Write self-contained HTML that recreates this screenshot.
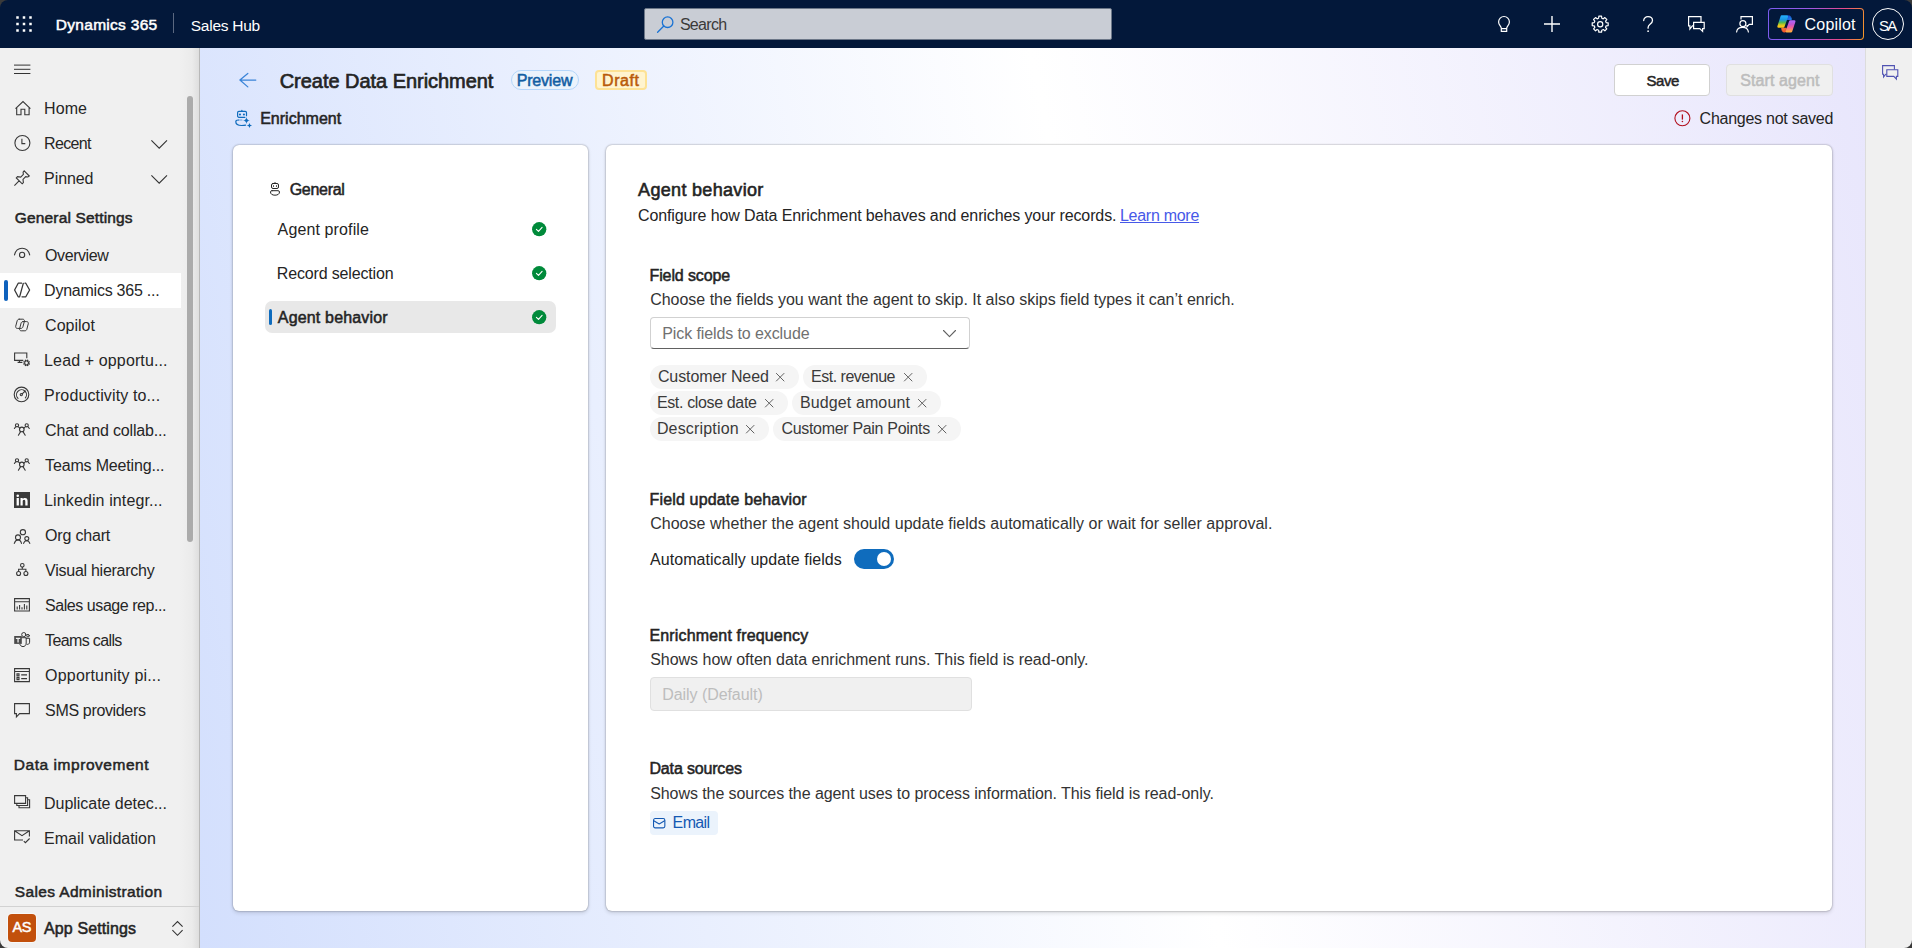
<!DOCTYPE html>
<html lang="en"><head><meta charset="utf-8"><title>Create Data Enrichment - Dynamics 365</title>
<style>
html,body{margin:0;padding:0;}
body{width:1912px;height:948px;overflow:hidden;position:relative;background:#f0f0f0;font-family:"Liberation Sans",sans-serif;}
.t{position:absolute;white-space:nowrap;line-height:normal;font-family:"Liberation Sans",sans-serif;}
</style></head>
<body>
<div style="position:absolute;left:0px;top:0px;width:1912px;height:48px;background:#03183a;"></div>
<svg style="position:absolute;left:15.6px;top:15.6px;overflow:visible" width="16" height="16" viewBox="0 0 16 16" ><rect x="0.25" y="0.25" width="2.5" height="2.5" fill="#fff"/><rect x="0.25" y="6.75" width="2.5" height="2.5" fill="#fff"/><rect x="0.25" y="13.25" width="2.5" height="2.5" fill="#fff"/><rect x="6.75" y="0.25" width="2.5" height="2.5" fill="#fff"/><rect x="6.75" y="6.75" width="2.5" height="2.5" fill="#fff"/><rect x="6.75" y="13.25" width="2.5" height="2.5" fill="#fff"/><rect x="13.25" y="0.25" width="2.5" height="2.5" fill="#fff"/><rect x="13.25" y="6.75" width="2.5" height="2.5" fill="#fff"/><rect x="13.25" y="13.25" width="2.5" height="2.5" fill="#fff"/></svg>
<span id="t_d365" class="t" style="left:55.86px;top:16.00px;font-size:15.5px;font-weight:400;-webkit-text-stroke:0.51px #fff;color:#fff;letter-spacing:0.282px;">Dynamics 365</span>
<div style="position:absolute;left:173px;top:13px;width:1px;height:20px;background:#5b6880;"></div>
<span id="t_saleshub" class="t" style="left:190.80px;top:16.70px;font-size:15.5px;font-weight:400;color:#fff;letter-spacing:-0.262px;">Sales Hub</span>
<div style="position:absolute;left:644px;top:8px;width:468px;height:32px;background:#c9cdd5;border:1px solid #6c7788;box-sizing:border-box;border-radius:2px;"></div>
<svg style="position:absolute;left:656.5px;top:15.8px;overflow:visible" width="17" height="17" viewBox="0 0 17 17" ><circle cx="10.6" cy="6.2" r="5.3" fill="none" stroke="#1a73d4" stroke-width="1.3" stroke-linecap="round" stroke-linejoin="round"/><path fill="none" stroke="#1a73d4" stroke-width="1.3" stroke-linecap="round" stroke-linejoin="round" d="M6.8 10 L0.6 16.2"/></svg>
<span id="t_search" class="t" style="left:679.90px;top:15.70px;font-size:16px;font-weight:400;color:#3b3a39;letter-spacing:-0.699px;">Search</span>
<svg style="position:absolute;left:1497.7px;top:15.8px;overflow:visible" width="12" height="16" viewBox="0 0 12 16" ><path fill="none" stroke="#ffffff" stroke-width="1.2" stroke-linecap="round" stroke-linejoin="round" d="M3.3 12.2 C3.3 10.2 0.6 9.2 0.6 5.9 A5.4 5.4 0 0 1 11.4 5.9 C11.4 9.2 8.7 10.2 8.7 12.2 V15.4 H3.3 Z M3.3 12.6 H8.7"/></svg>
<svg style="position:absolute;left:1544.1px;top:16px;overflow:visible" width="16" height="16" viewBox="0 0 16 16" ><path fill="none" stroke="#ffffff" stroke-width="1.4" stroke-linecap="butt" stroke-linejoin="miter" d="M8 0 V16 M0 8 H16"/></svg>
<svg style="position:absolute;left:1591.9px;top:15.8px;overflow:visible" width="16.4" height="16.4" viewBox="0 0 16.4 16.4" ><path fill="none" stroke="#ffffff" stroke-width="1.2" stroke-linecap="round" stroke-linejoin="round" d="M6.61 2.21 L6.83 0.22 L9.57 0.22 L9.79 2.21 L11.31 2.84 L12.88 1.59 L14.81 3.52 L13.56 5.09 L14.19 6.61 L16.18 6.83 L16.18 9.57 L14.19 9.79 L13.56 11.31 L14.81 12.88 L12.88 14.81 L11.31 13.56 L9.79 14.19 L9.57 16.18 L6.83 16.18 L6.61 14.19 L5.09 13.56 L3.52 14.81 L1.59 12.88 L2.84 11.31 L2.21 9.79 L0.22 9.57 L0.22 6.83 L2.21 6.61 L2.84 5.09 L1.59 3.52 L3.52 1.59 L5.09 2.84 Z"/><circle cx="8.2" cy="8.2" r="2.6" fill="none" stroke="#ffffff" stroke-width="1.2" stroke-linecap="round" stroke-linejoin="round"/></svg>
<svg style="position:absolute;left:1642.8px;top:15.9px;overflow:visible" width="10.2" height="16.2" viewBox="0 0 10.2 16.2" ><path fill="none" stroke="#ffffff" stroke-width="1.3" stroke-linecap="round" stroke-linejoin="round" d="M0.7 4.6 C0.7 1.9 2.8 0.7 5 0.7 C7.6 0.7 9.5 2.3 9.5 4.6 C9.5 8 5.1 8.2 5.1 11.6 V12.2"/><circle cx="5.1" cy="15.2" r="0.85" fill="#ffffff"/></svg>
<svg style="position:absolute;left:1687.8px;top:16.2px;overflow:visible" width="17" height="16" viewBox="0 0 17 16" ><path fill="none" stroke="#ffffff" stroke-width="1.2" stroke-linecap="butt" stroke-linejoin="miter" d="M5.4 9.8 H4.4 L1.9 13 V9.8 H0.6 V0.6 H13 V6"/><path fill="none" stroke="#ffffff" stroke-width="1.2" stroke-linecap="butt" stroke-linejoin="miter" d="M5.6 6.3 H16.2 V12.6 H14.6 V15.4 L11.8 12.6 H5.6 Z"/></svg>
<svg style="position:absolute;left:1735.7px;top:16px;overflow:visible" width="17" height="16.4" viewBox="0 0 17 16.4" ><circle cx="6.9" cy="7.7" r="3" fill="none" stroke="#ffffff" stroke-width="1.2" stroke-linecap="round" stroke-linejoin="round"/><path fill="none" stroke="#ffffff" stroke-width="1.2" stroke-linecap="round" stroke-linejoin="round" d="M0.6 16 C0.9 12.8 3.6 11.4 6.6 11.4 C9.6 11.4 12 12.8 12.4 16"/><path fill="none" stroke="#ffffff" stroke-width="1.2" stroke-linecap="butt" stroke-linejoin="miter" d="M5 3.4 V0.6 H16.4 V8.4 H13.2 L11 10.8 V9"/></svg>
<div style="position:absolute;left:1768px;top:8px;width:96px;height:32px;border-radius:4px;background:linear-gradient(100deg,#7a5cf0 0%,#9b59e8 40%,#e8488c 75%,#f59a23 100%);"></div>
<div style="position:absolute;left:1769.2px;top:9.2px;width:93.6px;height:29.6px;border-radius:3px;background:#03183a;"></div>
<svg style="position:absolute;left:1776.6px;top:14.8px;overflow:visible" width="19" height="18.2" viewBox="0 0 19 18.2" ><defs><linearGradient id="cg1" x1="0" y1="0" x2="0" y2="1"><stop offset="0" stop-color="#22aaf8"/><stop offset="0.32" stop-color="#1a98e0"/><stop offset="0.6" stop-color="#52b84e"/><stop offset="0.85" stop-color="#d9c81e"/><stop offset="1" stop-color="#fcc419"/></linearGradient><linearGradient id="cg2" x1="0" y1="0" x2="0" y2="1"><stop offset="0" stop-color="#b163f2"/><stop offset="0.3" stop-color="#c455cf"/><stop offset="0.6" stop-color="#f0609a"/><stop offset="0.85" stop-color="#fb8a66"/><stop offset="1" stop-color="#ffa740"/></linearGradient><linearGradient id="cg3" x1="0" y1="0" x2="1" y2="1"><stop offset="0" stop-color="#1d43d4"/><stop offset="1" stop-color="#1f86ee"/></linearGradient><linearGradient id="cg4" x1="0" y1="0" x2="0.6" y2="1"><stop offset="0" stop-color="#fb7a35"/><stop offset="1" stop-color="#f4502a"/></linearGradient></defs><path fill="url(#cg3)" stroke="url(#cg3)" stroke-width="1" stroke-linejoin="round" d="M10.4 0.9 H12 C13 0.9 13.5 1.5 13.8 2.4 L14.4 4.4 H10 Z"/><path fill="url(#cg4)" stroke="url(#cg4)" stroke-width="1" stroke-linejoin="round" d="M4.7 13.3 H9.2 L8.4 17 H7 C6 17 5.5 16.4 5.2 15.5 Z"/><path fill="url(#cg1)" stroke="url(#cg1)" stroke-width="2.4" stroke-linejoin="round" d="M4.7 1.5 H9.9 L6.3 11.6 H1.5 Z"/><path fill="url(#cg2)" stroke="url(#cg2)" stroke-width="2.4" stroke-linejoin="round" d="M13.3 6.4 H17.3 L14 16.3 H9.7 Z"/></svg>
<span id="t_copilotbtn" class="t" style="left:1804.60px;top:16.00px;font-size:16px;font-weight:400;color:#fff;letter-spacing:0.190px;">Copilot</span>
<div style="position:absolute;left:1872px;top:8px;width:32px;height:32px;border-radius:50%;border:1.3px solid #fff;box-sizing:border-box;"></div>
<span id="t_sa" class="t" style="left:1878.90px;top:16.60px;font-size:15px;font-weight:400;color:#fff;letter-spacing:-1.705px;">SA</span>
<div style="position:absolute;left:0px;top:48px;width:200px;height:900px;background:linear-gradient(90deg,#f0f0f0 0,#f0f0f0 180px,#ebebeb 192px,#dedede 199px,#b8b8b8 199px,#b8b8b8 200px);"></div>
<svg style="position:absolute;left:14px;top:64px;overflow:visible" width="17" height="10" viewBox="0 0 17 10" ><path fill="none" stroke="#333" stroke-width="1" stroke-linecap="butt" stroke-linejoin="miter" d="M0 1.1 H16.4 M0 5.3 H16.4 M0 9.5 H16.4"/></svg>
<div style="position:absolute;left:187.2px;top:95.8px;width:5.8px;height:446px;background:#ababab;border-radius:3px;"></div>
<div style="position:absolute;left:0px;top:273px;width:181px;height:35px;background:#fff;"></div>
<div style="position:absolute;left:4px;top:280px;width:4px;height:21px;background:#0f62bd;border-radius:2px;"></div>
<span id="t_n_home" class="t" style="left:44.10px;top:100.00px;font-size:16px;font-weight:400;color:#262626;letter-spacing:0.040px;">Home</span>
<svg style="position:absolute;left:14.6px;top:100.9px;overflow:visible" width="16" height="16" viewBox="0 0 16 16" ><path fill="none" stroke="#383838" stroke-width="1.1" stroke-linecap="butt" stroke-linejoin="miter" d="M0.5 7.7 L8 0.6 L15.4 7.7 M1.7 6.7 V13.8 H6 V8.3 H9.8 V13.8 H14.1 V6.7"/></svg>
<span id="t_n_recent" class="t" style="left:44.10px;top:135.00px;font-size:16px;font-weight:400;color:#262626;letter-spacing:-0.670px;">Recent</span>
<svg style="position:absolute;left:14px;top:135px;overflow:visible" width="16" height="16" viewBox="0 0 16 16" ><circle cx="8.4" cy="8" r="7.5" fill="none" stroke="#383838" stroke-width="1.1" stroke-linecap="round" stroke-linejoin="round"/><path fill="none" stroke="#383838" stroke-width="1.1" stroke-linecap="butt" stroke-linejoin="miter" d="M7.9 3.8 V8.6 H11.3"/></svg>
<span id="t_n_pinned" class="t" style="left:44.10px;top:170.00px;font-size:16px;font-weight:400;color:#262626;letter-spacing:-0.084px;">Pinned</span>
<svg style="position:absolute;left:14.2px;top:170.4px;overflow:visible" width="16" height="16" viewBox="0 0 16 16" ><path fill="none" stroke="#383838" stroke-width="1.1" stroke-linecap="butt" stroke-linejoin="miter" d="M0.4 15.6 L5.3 10.7 M10.2 0.9 L15.3 6 L13.9 7 L11.7 6.7 L9 9.4 L9.4 12.6 L8.2 13.8 L2.3 7.9 L3.5 6.7 L6.7 7.1 L9.4 4.4 L9.1 2.2 Z"/></svg>
<span id="t_n_overview" class="t" style="left:45.10px;top:247.00px;font-size:16px;font-weight:400;color:#262626;letter-spacing:-0.432px;">Overview</span>
<svg style="position:absolute;left:14px;top:246px;overflow:visible" width="16" height="16" viewBox="0 0 16 16" ><path fill="none" stroke="#383838" stroke-width="1.1" stroke-linecap="round" stroke-linejoin="round" d="M0.5 8.9 C2.6 0 13.6 0 15.7 8.9"/><circle cx="8.1" cy="8.9" r="2.6" fill="none" stroke="#383838" stroke-width="1.1" stroke-linecap="round" stroke-linejoin="round"/></svg>
<span id="t_n_dyn" class="t" style="left:44.10px;top:282.00px;font-size:16px;font-weight:400;color:#262626;letter-spacing:-0.241px;">Dynamics 365 ...</span>
<svg style="position:absolute;left:14.2px;top:282px;overflow:visible" width="16" height="16" viewBox="0 0 16 16" ><path fill="none" stroke="#383838" stroke-width="1.3" stroke-linecap="round" stroke-linejoin="round" d="M7.6 1.2 H4.2 L0.6 8 L4.2 14.8 H5.2 M9.3 1.4 L5.6 14.8 M8 14.8 H11.8 L15.6 8 L11.8 1.2 H11"/></svg>
<span id="t_n_cop" class="t" style="left:45.10px;top:317.00px;font-size:16px;font-weight:400;color:#262626;letter-spacing:-0.010px;">Copilot</span>
<svg style="position:absolute;left:14.2px;top:318.2px;overflow:visible" width="16" height="16" viewBox="0 0 16 16" ><path fill="none" stroke="#383838" stroke-width="1" stroke-linecap="round" stroke-linejoin="round" d="M5.2 1.2h3.6c1.1 0 1.9 1 1.6 2.1l-1.5 5.6c-.25.9-1 1.5-1.9 1.5H3.3c-1.1 0-1.9-1-1.6-2.1l1.5-5.6c.25-.9 1-1.5 1.9-1.5z"/><path fill="none" stroke="#383838" stroke-width="1" stroke-linecap="round" stroke-linejoin="round" d="M9 3.6h3.7c1.1 0 1.9 1 1.6 2.1l-1.5 5.6c-.25.9-1 1.5-1.9 1.5H7.2c-1.1 0-1.9-1-1.6-2.1l1.5-5.6C7.35 4.2 8.1 3.6 9 3.6z"/></svg>
<span id="t_n_lead" class="t" style="left:44.10px;top:352.00px;font-size:16px;font-weight:400;color:#262626;letter-spacing:0.126px;">Lead + opportu...</span>
<svg style="position:absolute;left:13.6px;top:352.3px;overflow:visible" width="16" height="16" viewBox="0 0 16 16" ><path fill="none" stroke="#383838" stroke-width="1.1" stroke-linecap="butt" stroke-linejoin="miter" d="M9.3 8.4 H0.6 V1 H12.8 V6.2 M5.5 8.4 V10.4 M3.6 10.4 H8.4"/><circle cx="12.6" cy="10.9" r="1.9" fill="none" stroke="#383838" stroke-width="1.0" stroke-linecap="round" stroke-linejoin="round"/><path fill="none" stroke="#383838" stroke-width="1.5" stroke-linecap="butt" stroke-linejoin="miter" d="M14.36 11.63 L15.74 12.20 M13.33 12.66 L13.90 14.04 M11.87 12.66 L11.30 14.04 M10.84 11.63 L9.46 12.20 M10.84 10.17 L9.46 9.60 M11.87 9.14 L11.30 7.76 M13.33 9.14 L13.90 7.76 M14.36 10.17 L15.74 9.60 "/></svg>
<span id="t_n_prod" class="t" style="left:44.10px;top:387.00px;font-size:16px;font-weight:400;color:#262626;letter-spacing:0.131px;">Productivity to...</span>
<svg style="position:absolute;left:14px;top:386px;overflow:visible" width="16" height="16" viewBox="0 0 16 16" ><circle cx="7.5" cy="8.4" r="7.3" fill="none" stroke="#383838" stroke-width="1.1" stroke-linecap="round" stroke-linejoin="round"/><path fill="none" stroke="#383838" stroke-width="1.1" stroke-linecap="round" stroke-linejoin="round" d="M4.0 12.3 A5 5 0 1 1 11.4 11.9"/><circle cx="7.3" cy="8.6" r="1.1" fill="none" stroke="#383838" stroke-width="1.1" stroke-linecap="round" stroke-linejoin="round"/><path fill="none" stroke="#383838" stroke-width="1.1" stroke-linecap="round" stroke-linejoin="round" d="M8.2 7.8 L11.2 5"/></svg>
<span id="t_n_chatc" class="t" style="left:45.10px;top:422.00px;font-size:16px;font-weight:400;color:#262626;letter-spacing:-0.169px;">Chat and collab...</span>
<svg style="position:absolute;left:14px;top:421.5px;overflow:visible" width="16" height="16" viewBox="0 0 16 16" ><circle cx="7.8" cy="7.4" r="2.3" fill="none" stroke="#383838" stroke-width="1.1" stroke-linecap="round" stroke-linejoin="round"/><path fill="none" stroke="#383838" stroke-width="1.1" stroke-linecap="round" stroke-linejoin="round" d="M4.4 13.2 L6.6 9.6 M11.2 13.2 L9 9.6"/><circle cx="3" cy="3.3" r="1.6" fill="none" stroke="#383838" stroke-width="1.1" stroke-linecap="round" stroke-linejoin="round"/><circle cx="12.7" cy="3.3" r="1.6" fill="none" stroke="#383838" stroke-width="1.1" stroke-linecap="round" stroke-linejoin="round"/><path fill="none" stroke="#383838" stroke-width="1.1" stroke-linecap="round" stroke-linejoin="round" d="M0.4 6.5 L1.6 4.9 M4.4 4.9 L5.8 6.2 M15.3 6.5 L14.1 4.9 M11.3 4.9 L9.9 6.2"/></svg>
<span id="t_n_teamsm" class="t" style="left:45.10px;top:457.00px;font-size:16px;font-weight:400;color:#262626;letter-spacing:-0.166px;">Teams Meeting...</span>
<svg style="position:absolute;left:14px;top:456.5px;overflow:visible" width="16" height="16" viewBox="0 0 16 16" ><circle cx="7.8" cy="7.4" r="2.3" fill="none" stroke="#383838" stroke-width="1.1" stroke-linecap="round" stroke-linejoin="round"/><path fill="none" stroke="#383838" stroke-width="1.1" stroke-linecap="round" stroke-linejoin="round" d="M4.4 13.2 L6.6 9.6 M11.2 13.2 L9 9.6"/><circle cx="3" cy="3.3" r="1.6" fill="none" stroke="#383838" stroke-width="1.1" stroke-linecap="round" stroke-linejoin="round"/><circle cx="12.7" cy="3.3" r="1.6" fill="none" stroke="#383838" stroke-width="1.1" stroke-linecap="round" stroke-linejoin="round"/><path fill="none" stroke="#383838" stroke-width="1.1" stroke-linecap="round" stroke-linejoin="round" d="M0.4 6.5 L1.6 4.9 M4.4 4.9 L5.8 6.2 M15.3 6.5 L14.1 4.9 M11.3 4.9 L9.9 6.2"/></svg>
<span id="t_n_lnk" class="t" style="left:44.10px;top:492.00px;font-size:16px;font-weight:400;color:#262626;letter-spacing:0.113px;">Linkedin integr...</span>
<svg style="position:absolute;left:14px;top:492px;overflow:visible" width="16" height="16" viewBox="0 0 16 16" ><rect x="0" y="0" width="16" height="16" fill="#3a3a3a"/><path fill="#fff" d="M2.6 6.1h2.3v7.3H2.6z M3.75 2.4a1.3 1.3 0 1 1 0 2.6a1.3 1.3 0 0 1 0-2.6z M6.5 6.1h2.2v1c.4-.7 1.2-1.2 2.3-1.2c2.2 0 2.6 1.4 2.6 3.3v4.2h-2.3V9.7c0-.9 0-2-1.2-2s-1.4 1-1.4 1.9v3.8H6.5z"/></svg>
<span id="t_n_org" class="t" style="left:45.10px;top:527.00px;font-size:16px;font-weight:400;color:#262626;letter-spacing:-0.193px;">Org chart</span>
<svg style="position:absolute;left:14px;top:528.6px;overflow:visible" width="16" height="16" viewBox="0 0 16 16" ><circle cx="8.9" cy="3.2" r="2.6" fill="none" stroke="#383838" stroke-width="1.1" stroke-linecap="round" stroke-linejoin="round"/><circle cx="4" cy="8.4" r="2.5" fill="none" stroke="#383838" stroke-width="1.1" stroke-linecap="round" stroke-linejoin="round"/><circle cx="12.8" cy="9.6" r="2" fill="none" stroke="#383838" stroke-width="1.1" stroke-linecap="round" stroke-linejoin="round"/><path fill="none" stroke="#383838" stroke-width="1.1" stroke-linecap="round" stroke-linejoin="round" d="M0.3 14.4 C1.2 11.6 2.6 10.9 4 10.9 C5.4 10.9 6.8 11.6 7.5 14.4 M9.6 14.4 C10.2 12.3 11.5 11.7 12.8 11.7 C14.1 11.7 15.2 12.5 15.8 14.4"/></svg>
<span id="t_n_vis" class="t" style="left:45.10px;top:562.00px;font-size:16px;font-weight:400;color:#262626;letter-spacing:-0.263px;">Visual hierarchy</span>
<svg style="position:absolute;left:15.5px;top:563.4px;overflow:visible" width="16" height="16" viewBox="0 0 16 16" ><circle cx="6.3" cy="2.3" r="1.8" fill="none" stroke="#383838" stroke-width="1.1" stroke-linecap="round" stroke-linejoin="round"/><circle cx="2.6" cy="10.5" r="2" fill="none" stroke="#383838" stroke-width="1.1" stroke-linecap="round" stroke-linejoin="round"/><circle cx="9.9" cy="10.5" r="2" fill="none" stroke="#383838" stroke-width="1.1" stroke-linecap="round" stroke-linejoin="round"/><path fill="none" stroke="#383838" stroke-width="1.1" stroke-linecap="butt" stroke-linejoin="miter" d="M6.3 4.1 V6.3 M2.6 8.5 V6.3 H9.9 V8.5"/></svg>
<span id="t_n_salesu" class="t" style="left:45.10px;top:597.00px;font-size:16px;font-weight:400;color:#262626;letter-spacing:-0.448px;">Sales usage rep...</span>
<svg style="position:absolute;left:14px;top:597.6px;overflow:visible" width="16" height="16" viewBox="0 0 16 16" ><path fill="none" stroke="#383838" stroke-width="1.1" stroke-linecap="butt" stroke-linejoin="miter" d="M0.6 0.6 H15.4 V13 H0.6 Z M0.6 3.7 H15.4"/><path fill="none" stroke="#383838" stroke-width="1.1" stroke-linecap="butt" stroke-linejoin="miter" d="M3.2 11.4 V8.6 M5.6 11.4 V7 M8 11.4 V9.2 M10.4 11.4 V6 M12.8 11.4 V7.6"/></svg>
<span id="t_n_tcalls" class="t" style="left:45.10px;top:632.00px;font-size:16px;font-weight:400;color:#262626;letter-spacing:-0.638px;">Teams calls</span>
<svg style="position:absolute;left:14px;top:632px;overflow:visible" width="16" height="16" viewBox="0 0 16 16" ><circle cx="9.8" cy="2.6" r="2.1" fill="none" stroke="#383838" stroke-width="1" stroke-linecap="round" stroke-linejoin="round"/><circle cx="14" cy="3.7" r="1.3" fill="none" stroke="#383838" stroke-width="1" stroke-linecap="round" stroke-linejoin="round"/><path fill="none" stroke="#383838" stroke-width="1" stroke-linecap="round" stroke-linejoin="round" d="M7.5 5.7 H12.2 V11 C12.2 13.4 10.6 14.6 9 14.6 C7.6 14.6 6.3 13.7 5.9 12.4 M12.2 6.3 H15.6 V10.2 C15.6 12 14.2 12.6 13 12.4"/><rect x="0.2" y="4" width="7.6" height="7.9" fill="#4a4a4a"/><path fill="#f0f0f0" d="M1.9 5.8 H6.2 V7 H4.7 V10.6 H3.4 V7 H1.9 Z"/></svg>
<span id="t_n_opp" class="t" style="left:45.10px;top:667.00px;font-size:16px;font-weight:400;color:#262626;letter-spacing:0.181px;">Opportunity pi...</span>
<svg style="position:absolute;left:14px;top:667.7px;overflow:visible" width="16" height="16" viewBox="0 0 16 16" ><path fill="none" stroke="#383838" stroke-width="1.1" stroke-linecap="butt" stroke-linejoin="miter" d="M0.6 0.6 H15.4 V13.6 H0.6 Z M0.6 3.5 H15.4 M3 5.9 H5 V7.9 H3 Z M3 9.6 H5 V11.6 H3 Z M7.2 6.9 H13 M7.2 10.6 H13"/></svg>
<span id="t_n_sms" class="t" style="left:45.10px;top:702.00px;font-size:16px;font-weight:400;color:#262626;letter-spacing:-0.343px;">SMS providers</span>
<svg style="position:absolute;left:14px;top:702.8px;overflow:visible" width="16" height="16" viewBox="0 0 16 16" ><path fill="none" stroke="#383838" stroke-width="1.1" stroke-linecap="butt" stroke-linejoin="miter" d="M0.6 0.6 H15.4 V10.6 H5.6 L2.4 13.8 V10.6 H0.6 Z"/></svg>
<span id="t_n_dupd" class="t" style="left:44.10px;top:794.70px;font-size:16px;font-weight:400;color:#262626;letter-spacing:-0.046px;">Duplicate detec...</span>
<svg style="position:absolute;left:14px;top:795.2px;overflow:visible" width="16" height="16" viewBox="0 0 16 16" ><path fill="none" stroke="#383838" stroke-width="1.1" stroke-linecap="butt" stroke-linejoin="miter" d="M0.6 0.6 H11.6 V8.4 H0.6 Z M11.6 2.7 H13.6 V10.5 H2.8 V8.4 M13.6 4.8 H15.6 V12.7 H5 V10.5"/></svg>
<span id="t_n_emailv" class="t" style="left:44.10px;top:829.70px;font-size:16px;font-weight:400;color:#262626;letter-spacing:-0.017px;">Email validation</span>
<svg style="position:absolute;left:14px;top:830.4px;overflow:visible" width="16" height="16" viewBox="0 0 16 16" ><path fill="none" stroke="#383838" stroke-width="1.1" stroke-linecap="butt" stroke-linejoin="miter" d="M9 10 H0.6 V0.8 H15.4 V6.6 M0.6 0.8 L8 5.6 L15.4 0.8"/><path fill="none" stroke="#383838" stroke-width="1.1" stroke-linecap="butt" stroke-linejoin="miter" d="M9.8 11.1 L11.4 12.7 L15.6 8.5"/></svg>
<svg style="position:absolute;left:150.8px;top:139.8px;overflow:visible" width="17" height="9" viewBox="0 0 17 9" ><path fill="none" stroke="#333" stroke-width="1.1" stroke-linecap="butt" stroke-linejoin="miter" d="M0.4 0.4 L8.2 8.2 L16 0.4"/></svg>
<svg style="position:absolute;left:150.8px;top:174.8px;overflow:visible" width="17" height="9" viewBox="0 0 17 9" ><path fill="none" stroke="#333" stroke-width="1.1" stroke-linecap="butt" stroke-linejoin="miter" d="M0.4 0.4 L8.2 8.2 L16 0.4"/></svg>
<span id="t_g_general" class="t" style="left:14.86px;top:209.20px;font-size:15.5px;font-weight:400;-webkit-text-stroke:0.51px #242424;color:#242424;letter-spacing:0.146px;">General Settings</span>
<span id="t_g_data" class="t" style="left:13.86px;top:756.00px;font-size:15.5px;font-weight:400;-webkit-text-stroke:0.51px #242424;color:#242424;letter-spacing:0.538px;">Data improvement</span>
<span id="t_g_salesadm" class="t" style="left:14.86px;top:882.90px;font-size:15.5px;font-weight:400;-webkit-text-stroke:0.51px #242424;color:#242424;letter-spacing:0.354px;">Sales Administration</span>
<div style="position:absolute;left:0px;top:906px;width:199px;height:1px;background:#d2d2d2;"></div>
<div style="position:absolute;left:8px;top:914px;width:28px;height:28px;background:#c2500c;border-radius:4px;box-shadow:0 0 0 1px rgba(255,255,255,.55);"></div>
<span id="t_as" class="t" style="left:12.54px;top:919.00px;font-size:14.5px;font-weight:400;-webkit-text-stroke:0.48px #fff;color:#fff;letter-spacing:-0.451px;">AS</span>
<span id="t_appset" class="t" style="left:44.06px;top:920.00px;font-size:16px;font-weight:400;-webkit-text-stroke:0.53px #242424;color:#242424;letter-spacing:0.104px;">App Settings</span>
<svg style="position:absolute;left:171.6px;top:920.6px;overflow:visible" width="11" height="15" viewBox="0 0 11 15" ><path fill="none" stroke="#333" stroke-width="1.1" stroke-linecap="butt" stroke-linejoin="miter" d="M0.4 5.6 L5.5 0.5 L10.6 5.6 M0.4 9.2 L5.5 14.3 L10.6 9.2"/></svg>
<div style="position:absolute;left:200px;top:48px;width:1665px;height:900px;background:linear-gradient(78deg,#d3dffd 0%,#ffffff 55%,#e8e6fc 100%);"></div>
<div style="position:absolute;left:1865px;top:48px;width:47px;height:900px;background:#f0f0f0;border-left:1px solid #dcdcdc;box-sizing:border-box;"></div>
<svg style="position:absolute;left:1882px;top:64.6px;overflow:visible" width="17" height="15.4" viewBox="0 0 17 15.4" ><path fill="none" stroke="#4f52b2" stroke-width="1.1" stroke-linecap="butt" stroke-linejoin="miter" d="M4.6 9.2 H3.8 L1.6 12 V9.2 H0.6 V0.6 H12.4 V4.6"/><path fill="none" stroke="#4f52b2" stroke-width="1.1" stroke-linecap="butt" stroke-linejoin="miter" d="M4.8 4.8 H15.8 V11.4 H14.4 V14.2 L11.8 11.4 H4.8 Z"/></svg>
<svg style="position:absolute;left:239.2px;top:72.9px;overflow:visible" width="17" height="14.4" viewBox="0 0 17 14.4" ><path fill="none" stroke="#3a84d8" stroke-width="1.25" stroke-linecap="round" stroke-linejoin="round" d="M8.8 0.4 L0.9 7.05 L8.8 13.9 M0.9 7.05 H16.8"/></svg>
<span id="t_title" class="t" style="left:279.73px;top:70.00px;font-size:20px;font-weight:400;-webkit-text-stroke:0.66px #242424;color:#242424;letter-spacing:-0.040px;">Create Data Enrichment</span>
<div style="position:absolute;left:511px;top:70px;width:68px;height:20px;border:1px solid #b4d6fa;background:#ebf3fc;border-radius:10px;box-sizing:border-box;"></div>
<span id="t_preview" class="t" style="left:516.66px;top:71.60px;font-size:16px;font-weight:400;-webkit-text-stroke:0.53px #115ea3;color:#115ea3;letter-spacing:-0.180px;">Preview</span>
<div style="position:absolute;left:595px;top:70px;width:52px;height:20px;border:2px solid #fde295;background:#fff4cf;border-radius:4px;box-sizing:border-box;"></div>
<span id="t_draft" class="t" style="left:602.06px;top:71.60px;font-size:16px;font-weight:400;-webkit-text-stroke:0.53px #b95a0a;color:#b95a0a;letter-spacing:0.561px;">Draft</span>
<svg style="position:absolute;left:235px;top:109px;overflow:visible" width="18" height="20" viewBox="0 0 18 20" ><path fill="none" stroke="#0f6cbd" stroke-width="1.2" stroke-linecap="round" stroke-linejoin="round" d="M6.87 1.35 V1.8"/><path fill="none" stroke="#0f6cbd" stroke-width="1.2" stroke-linecap="round" stroke-linejoin="round" d="M9.9 8.3 H3.9 C3.1 8.3 2.6 7.8 2.6 7 V3.7 C2.6 2.9 3.1 2.4 3.9 2.4 H10.2 C11 2.4 11.5 2.9 11.5 3.7 V6.7"/><circle cx="4.97" cy="5.44" r="1.05" fill="#0f6cbd"/><circle cx="8.92" cy="5.44" r="1.05" fill="#0f6cbd"/><path fill="none" stroke="#0f6cbd" stroke-width="1.2" stroke-linecap="round" stroke-linejoin="round" opacity="0.55" d="M6.9 11 H3.4"/><path fill="none" stroke="#0f6cbd" stroke-width="1.2" stroke-linecap="round" stroke-linejoin="round" d="M3.4 11 C1.8 11 0.8 11.7 0.8 12.8 C0.8 15 3.2 16.5 6.6 16.5 C8.2 16.5 9.6 16.4 10.6 16.1"/><path fill="#0f6cbd" d="M11.46 7.960000000000001 Q11.81 11.110000000000001 14.96 11.46 Q11.81 11.81 11.46 14.96 Q11.110000000000001 11.81 7.960000000000001 11.46 Q11.110000000000001 11.110000000000001 11.46 7.960000000000001 Z"/><path fill="#0f6cbd" d="M14.46 13.95 Q14.715000000000002 16.245 17.01 16.5 Q14.715000000000002 16.755 14.46 19.05 Q14.205 16.755 11.91 16.5 Q14.205 16.245 14.46 13.95 Z"/></svg>
<span id="t_enrich" class="t" style="left:260.16px;top:109.60px;font-size:16px;font-weight:400;-webkit-text-stroke:0.53px #242424;color:#242424;letter-spacing:0.010px;">Enrichment</span>
<div style="position:absolute;left:1614px;top:64px;width:96px;height:32px;background:#fff;border:1px solid #d1d1d1;border-radius:4px;box-sizing:border-box;"></div>
<span id="t_save" class="t" style="left:1646.44px;top:71.60px;font-size:15px;font-weight:400;-webkit-text-stroke:0.49px #242424;color:#242424;letter-spacing:-0.446px;">Save</span>
<div style="position:absolute;left:1726px;top:64px;width:107px;height:32px;background:#f0f0f0;border:1px solid #e0e0e0;border-radius:4px;box-sizing:border-box;"></div>
<span id="t_start" class="t" style="left:1740.17px;top:71.60px;font-size:16px;font-weight:400;-webkit-text-stroke:0.53px #bdbdbd;color:#bdbdbd;letter-spacing:0.094px;">Start agent</span>
<svg style="position:absolute;left:1674px;top:110.0px;overflow:visible" width="17" height="17" viewBox="0 0 17 17" ><circle cx="8.4" cy="8.3" r="7.5" fill="none" stroke="#b10e1c" stroke-width="1.1" stroke-linecap="round" stroke-linejoin="round"/><path fill="none" stroke="#b10e1c" stroke-width="1.3" stroke-linecap="butt" stroke-linejoin="miter" d="M8.4 4.4 V9.6"/><circle cx="8.4" cy="11.5" r="0.8" fill="#b10e1c"/></svg>
<span id="t_changes" class="t" style="left:1699.60px;top:110.20px;font-size:16px;font-weight:400;color:#242424;letter-spacing:-0.261px;">Changes not saved</span>
<div style="position:absolute;left:233px;top:145px;width:355px;height:766px;background:#fff;border-radius:6px;box-shadow:0 0 2px rgba(0,0,0,.42),0 2px 4px rgba(0,0,0,.13);"></div>
<div style="position:absolute;left:606px;top:145px;width:1226px;height:766px;background:#fff;border-radius:6px;box-shadow:0 0 2px rgba(0,0,0,.42),0 2px 4px rgba(0,0,0,.13);"></div>
<svg style="position:absolute;left:270px;top:182px;overflow:visible" width="11" height="14.4" viewBox="0 0 11 14.4" ><path fill="none" stroke="#242424" stroke-width="0.9" stroke-linecap="round" stroke-linejoin="round" d="M5 0.4 V1.2"/><rect x="1.5" y="1.5" width="7" height="5" rx="1.5" fill="none" stroke="#242424" stroke-width="1" stroke-linecap="round" stroke-linejoin="round"/><path fill="none" stroke="#333" stroke-width="1" stroke-linecap="butt" stroke-linejoin="miter" d="M3.5 3.3 V4.8 M6.5 3.3 V4.8"/><path fill="none" stroke="#242424" stroke-width="1" stroke-linecap="round" stroke-linejoin="round" d="M2 8.7 H8 C9 8.7 9.5 9.2 9.5 10 C9.5 12 7.8 13.2 5 13.2 C2.2 13.2 0.5 12 0.5 10 C0.5 9.2 1 8.7 2 8.7 Z"/></svg>
<span id="t_general" class="t" style="left:289.66px;top:180.80px;font-size:16px;font-weight:400;-webkit-text-stroke:0.53px #242424;color:#242424;letter-spacing:-0.283px;">General</span>
<span id="t_aprofile" class="t" style="left:277.60px;top:220.70px;font-size:16px;font-weight:400;color:#242424;letter-spacing:0.122px;">Agent profile</span>
<span id="t_recsel" class="t" style="left:276.80px;top:264.60px;font-size:16px;font-weight:400;color:#242424;letter-spacing:-0.158px;">Record selection</span>
<div style="position:absolute;left:265px;top:301px;width:291px;height:32px;background:#e8e8e8;border-radius:7px;"></div>
<div style="position:absolute;left:269px;top:309px;width:3px;height:16px;background:#0f6cbd;border-radius:1.5px;"></div>
<span id="t_abeh" class="t" style="left:277.87px;top:308.70px;font-size:16px;font-weight:400;-webkit-text-stroke:0.53px #242424;color:#242424;letter-spacing:0.159px;">Agent behavior</span>
<svg style="position:absolute;left:531.8px;top:222.20000000000002px;overflow:visible" width="14.4" height="14.4" viewBox="0 0 14.4 14.4" ><circle cx="7.2" cy="7.2" r="7.15" fill="#008a3a"/><path fill="none" stroke="#fff" stroke-width="1.1" stroke-linecap="round" stroke-linejoin="round" d="M4.4 7.3 L6.5 9.4 L10.1 5.4"/></svg>
<svg style="position:absolute;left:531.8px;top:266.2px;overflow:visible" width="14.4" height="14.4" viewBox="0 0 14.4 14.4" ><circle cx="7.2" cy="7.2" r="7.15" fill="#008a3a"/><path fill="none" stroke="#fff" stroke-width="1.1" stroke-linecap="round" stroke-linejoin="round" d="M4.4 7.3 L6.5 9.4 L10.1 5.4"/></svg>
<svg style="position:absolute;left:531.8px;top:310.2px;overflow:visible" width="14.4" height="14.4" viewBox="0 0 14.4 14.4" ><circle cx="7.2" cy="7.2" r="7.15" fill="#008a3a"/><path fill="none" stroke="#fff" stroke-width="1.1" stroke-linecap="round" stroke-linejoin="round" d="M4.4 7.3 L6.5 9.4 L10.1 5.4"/></svg>
<span id="t_h_ab" class="t" style="left:638.09px;top:179.80px;font-size:18px;font-weight:400;-webkit-text-stroke:0.59px #242424;color:#242424;letter-spacing:0.317px;">Agent behavior</span>
<span id="t_conf" class="t" style="left:638.00px;top:207.20px;font-size:16px;font-weight:400;color:#242424;letter-spacing:-0.113px;">Configure how Data Enrichment behaves and enriches your records.</span>
<span id="t_learn" class="t" style="left:1120.00px;top:207.20px;font-size:16px;font-weight:400;color:#4759e8;letter-spacing:-0.280px;text-decoration:underline;text-decoration-thickness:1px;text-underline-offset:1px;">Learn more</span>
<span id="t_fscope" class="t" style="left:649.47px;top:267.00px;font-size:16px;font-weight:400;-webkit-text-stroke:0.53px #242424;color:#242424;letter-spacing:-0.105px;">Field scope</span>
<span id="t_choose1" class="t" style="left:650.20px;top:291.00px;font-size:16px;font-weight:400;color:#333333;letter-spacing:-0.017px;">Choose the fields you want the agent to skip. It also skips field types it can’t enrich.</span>
<div style="position:absolute;left:650px;top:317px;width:320px;height:32px;background:#fff;border:1px solid #d1d1d1;border-bottom-color:#616161;border-radius:4px;box-sizing:border-box;"></div>
<span id="t_pick" class="t" style="left:662.20px;top:325.30px;font-size:16px;font-weight:400;color:#707070;letter-spacing:-0.096px;">Pick fields to exclude</span>
<svg style="position:absolute;left:942.6px;top:330.2px;overflow:visible" width="13" height="7.4" viewBox="0 0 13 7.4" ><path fill="none" stroke="#616161" stroke-width="1.1" stroke-linecap="round" stroke-linejoin="round" d="M0.5 0.5 L6.5 6.6 L12.5 0.5"/></svg>
<div style="position:absolute;left:650.1px;top:365px;width:148.69999999999993px;height:24px;background:#f5f5f5;border-radius:12px;"></div>
<span id="t_tg1" class="t" style="left:657.90px;top:367.80px;font-size:16px;font-weight:400;color:#3a3a3a;letter-spacing:-0.087px;">Customer Need</span>
<svg style="position:absolute;left:776.0px;top:373px;overflow:visible" width="8.4" height="8.4" viewBox="0 0 8.4 8.4" ><path fill="none" stroke="#616161" stroke-width="1" stroke-linecap="round" stroke-linejoin="round" d="M0.4 0.4 L8 8 M8 0.4 L0.4 8"/></svg>
<div style="position:absolute;left:803.1px;top:365px;width:123.69999999999993px;height:24px;background:#f5f5f5;border-radius:12px;"></div>
<span id="t_tg2" class="t" style="left:811.00px;top:367.80px;font-size:16px;font-weight:400;color:#3a3a3a;letter-spacing:-0.485px;">Est. revenue</span>
<svg style="position:absolute;left:903.7px;top:373px;overflow:visible" width="8.4" height="8.4" viewBox="0 0 8.4 8.4" ><path fill="none" stroke="#616161" stroke-width="1" stroke-linecap="round" stroke-linejoin="round" d="M0.4 0.4 L8 8 M8 0.4 L0.4 8"/></svg>
<div style="position:absolute;left:650.1px;top:391px;width:137.89999999999998px;height:24px;background:#f5f5f5;border-radius:12px;"></div>
<span id="t_tg3" class="t" style="left:656.90px;top:393.80px;font-size:16px;font-weight:400;color:#3a3a3a;letter-spacing:-0.353px;">Est. close date</span>
<svg style="position:absolute;left:765.0px;top:399px;overflow:visible" width="8.4" height="8.4" viewBox="0 0 8.4 8.4" ><path fill="none" stroke="#616161" stroke-width="1" stroke-linecap="round" stroke-linejoin="round" d="M0.4 0.4 L8 8 M8 0.4 L0.4 8"/></svg>
<div style="position:absolute;left:792.0px;top:391px;width:149.0px;height:24px;background:#f5f5f5;border-radius:12px;"></div>
<span id="t_tg4" class="t" style="left:800.00px;top:393.80px;font-size:16px;font-weight:400;color:#3a3a3a;letter-spacing:0.110px;">Budget amount</span>
<svg style="position:absolute;left:917.9px;top:399px;overflow:visible" width="8.4" height="8.4" viewBox="0 0 8.4 8.4" ><path fill="none" stroke="#616161" stroke-width="1" stroke-linecap="round" stroke-linejoin="round" d="M0.4 0.4 L8 8 M8 0.4 L0.4 8"/></svg>
<div style="position:absolute;left:650.1px;top:417px;width:118.79999999999995px;height:24px;background:#f5f5f5;border-radius:12px;"></div>
<span id="t_tg5" class="t" style="left:656.90px;top:419.80px;font-size:16px;font-weight:400;color:#3a3a3a;letter-spacing:0.177px;">Description</span>
<svg style="position:absolute;left:745.8px;top:425px;overflow:visible" width="8.4" height="8.4" viewBox="0 0 8.4 8.4" ><path fill="none" stroke="#616161" stroke-width="1" stroke-linecap="round" stroke-linejoin="round" d="M0.4 0.4 L8 8 M8 0.4 L0.4 8"/></svg>
<div style="position:absolute;left:773.0px;top:417px;width:188.0px;height:24px;background:#f5f5f5;border-radius:12px;"></div>
<span id="t_tg6" class="t" style="left:781.40px;top:419.80px;font-size:16px;font-weight:400;color:#3a3a3a;letter-spacing:-0.312px;">Customer Pain Points</span>
<svg style="position:absolute;left:937.9px;top:425px;overflow:visible" width="8.4" height="8.4" viewBox="0 0 8.4 8.4" ><path fill="none" stroke="#616161" stroke-width="1" stroke-linecap="round" stroke-linejoin="round" d="M0.4 0.4 L8 8 M8 0.4 L0.4 8"/></svg>
<span id="t_fub" class="t" style="left:649.47px;top:491.10px;font-size:16px;font-weight:400;-webkit-text-stroke:0.53px #242424;color:#242424;letter-spacing:0.166px;">Field update behavior</span>
<span id="t_choose2" class="t" style="left:650.20px;top:514.80px;font-size:16px;font-weight:400;color:#333333;letter-spacing:0.026px;">Choose whether the agent should update fields automatically or wait for seller approval.</span>
<span id="t_auto" class="t" style="left:650.00px;top:551.00px;font-size:16px;font-weight:400;color:#242424;letter-spacing:0.057px;">Automatically update fields</span>
<div style="position:absolute;left:854px;top:549px;width:40px;height:20px;background:#0f6cbd;border-radius:10px;"></div>
<div style="position:absolute;left:877px;top:552px;width:14px;height:14px;background:#fff;border-radius:50%;"></div>
<span id="t_efreq" class="t" style="left:649.47px;top:627.40px;font-size:16px;font-weight:400;-webkit-text-stroke:0.53px #242424;color:#242424;letter-spacing:0.160px;">Enrichment frequency</span>
<span id="t_shows1" class="t" style="left:650.20px;top:650.60px;font-size:16px;font-weight:400;color:#333333;letter-spacing:-0.023px;">Shows how often data enrichment runs. This field is read-only.</span>
<div style="position:absolute;left:650px;top:677px;width:322px;height:34px;background:#f0f0f0;border:1px solid #e0e0e0;border-radius:4px;box-sizing:border-box;"></div>
<span id="t_daily" class="t" style="left:662.30px;top:685.80px;font-size:16px;font-weight:400;color:#bdbdbd;letter-spacing:-0.067px;">Daily (Default)</span>
<span id="t_dsrc" class="t" style="left:649.47px;top:760.40px;font-size:16px;font-weight:400;-webkit-text-stroke:0.53px #242424;color:#242424;letter-spacing:-0.163px;">Data sources</span>
<span id="t_shows2" class="t" style="left:650.20px;top:784.80px;font-size:16px;font-weight:400;color:#333333;letter-spacing:-0.073px;">Shows the sources the agent uses to process information. This field is read-only.</span>
<div style="position:absolute;left:650px;top:811px;width:68px;height:24px;background:#ebf3fc;border-radius:4px;"></div>
<svg style="position:absolute;left:652.8px;top:817.8px;overflow:visible" width="12.4" height="10.4" viewBox="0 0 12.4 10.4" ><rect x="0.55" y="0.55" width="11.3" height="9.3" rx="1.6" fill="none" stroke="#1459b3" stroke-width="1.1" stroke-linecap="round" stroke-linejoin="round"/><path fill="none" stroke="#1459b3" stroke-width="1.1" stroke-linecap="round" stroke-linejoin="round" d="M0.8 2.8 L6.2 6 L11.6 2.8"/></svg>
<span id="t_email" class="t" style="left:672.60px;top:813.80px;font-size:16px;font-weight:400;color:#1459b3;letter-spacing:-0.638px;">Email</span>
<div style="position:absolute;left:0px;top:0px;width:1912px;height:948px;border-radius:8px;box-shadow:0 0 0 12px #3a3a3a;pointer-events:none;"></div>
</body></html>
